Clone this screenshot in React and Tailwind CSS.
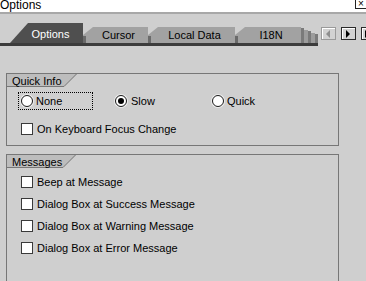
const Radio = ({ checked }) => (
  <span className="flex h-[12px] w-[12px] shrink-0 items-center justify-center rounded-full border border-[#1a1a1a] bg-white shadow-[0_0_0_1px_#ececec]">
    {checked && <span className="h-[6px] w-[6px] rounded-full bg-black" />}
  </span>
);

const Check = ({ label }) => (
  <div className="flex h-[12px] items-center gap-[4px] pl-[14px]">
    <span className="h-[12px] w-[12px] shrink-0 border border-[#3a3a3a] bg-white" />
    <span className="leading-[12px] whitespace-nowrap">{label}</span>
  </div>
);

const Legend = ({ title, width }) => (
  <div className="flex h-[13px]">
    <div className={`h-[13px] border-b border-[#777] bg-[#bdbdbd] pl-[5px] leading-[14px] ${width}`}>
      {title}
    </div>
    <svg width="13" height="13" viewBox="0 0 13 13" className="shrink-0">
      <polygon points="0,0 13,0 0,12.5" fill="#bdbdbd" />
      <line x1="0" y1="12.5" x2="13" y2="-0.5" stroke="#777" strokeWidth="1" />
    </svg>
  </div>
);

const Tab = ({ label, width }) => (
  <div
    className={`relative flex h-[16px] shrink-0 items-center justify-center bg-[#a2a2a2] pl-[6px] leading-[16px] [clip-path:polygon(0_100%,0_8px,10px_0,100%_0,100%_100%)] ${width}`}
  >
    <span className="absolute bottom-0 left-0 h-[7px] w-[3px] bg-[#6a6a6a]" />
    {label}
  </div>
);

const Arrow = ({ dir, color }) => (
  <svg width="5" height="8" viewBox="0 0 5 8">
    {dir === "left" ? (
      <polygon points="4,0 0,4 4,8" fill={color} />
    ) : (
      <polygon points="0,0 4,4 0,8" fill={color} />
    )}
  </svg>
);

export default function App() {
  return (
    <div className="h-[281px] w-[366px] overflow-hidden bg-[#cfcfcf] font-['Liberation_Sans',Arial,sans-serif] text-[11px] text-black">
      {/* title bar */}
      <div className="flex h-[12px] items-start justify-between bg-white">
        <span className="-mt-[1px] text-[12px] leading-[12px]">Options</span>
        <span className="-mt-[1px] flex h-[10px] w-[11px] items-center justify-center border-b border-l border-[#222] bg-white text-[10px] leading-[9px]">
          ×
        </span>
      </div>
      <div className="h-[2px] bg-[#a8a8a8]" />

      {/* tab strip */}
      <div className="flex h-[32px] items-start">
        <div className="flex w-[318px] shrink-0 flex-col">
          <div className="flex h-[29px] items-end pl-[10px]">
            <div className="flex h-[20px] w-[73px] shrink-0 items-center justify-center bg-[#4f4f4f] pl-[8px] pt-[2px] leading-[16px] text-white [clip-path:polygon(0_100%,18px_0,100%_0,100%_100%)]">
              Options
            </div>
            <Tab label="Cursor" width="w-[65px]" />
            <Tab label="Local Data" width="w-[87px]" />
            <Tab label="I18N" width="w-[66px]" />
            <div className="h-[15px] w-[3px] bg-[#7a7a7a]" />
            <div className="h-[13px] w-[4px] bg-[#9c9c9c]" />
            <div className="h-[12px] w-[3px] bg-[#7a7a7a]" />
            <div className="h-[10px] w-[4px] bg-[#9c9c9c]" />
            <div className="h-[9px] w-[3px] bg-[#7a7a7a]" />
          </div>
          <div className="h-[3px] bg-[#3c3c3c]" />
        </div>
        <div className="ml-[3px] mt-[13px] flex">
          <div className="flex h-[13px] w-[15px] shrink-0 items-center justify-center border border-[#9a9a9a] bg-[#d2d2d2] shadow-[inset_1px_1px_0_#fff]">
            <Arrow dir="left" color="#8e8e8e" />
          </div>
          <div className="ml-[5px] flex h-[13px] w-[15px] shrink-0 items-center justify-center border border-[#2a2a2a] bg-[#d2d2d2] shadow-[inset_1px_1px_0_#fff]">
            <Arrow dir="right" color="#000" />
          </div>
          <div className="ml-[5px] flex h-[13px] w-[15px] shrink-0 items-center justify-center gap-[1px] border border-[#2a2a2a] bg-[#d2d2d2] shadow-[inset_1px_1px_0_#fff]">
            <Arrow dir="right" color="#000" />
            <span className="h-[8px] w-[1px] bg-black" />
          </div>
        </div>
      </div>

      {/* Quick Info */}
      <div className="ml-[6px] mt-[27px] h-[73px] w-[333px] border border-[#777]">
        <Legend title="Quick Info" width="w-[57px]" />
        <div className="mt-[5px] flex h-[18px] items-center pl-[11px]">
          <div className="flex h-[18px] w-[75px] shrink-0 items-center gap-[3px] border border-dotted border-black pl-[2px] leading-[12px]">
            <Radio />
            <span>None</span>
          </div>
          <div className="ml-[22px] flex w-[97px] shrink-0 items-center gap-[4px] leading-[12px]">
            <Radio checked />
            <span>Slow</span>
          </div>
          <div className="flex items-center gap-[3px] leading-[12px]">
            <Radio />
            <span>Quick</span>
          </div>
        </div>
        <div className="mt-[13px]">
          <Check label="On Keyboard Focus Change" />
        </div>
      </div>

      {/* Messages */}
      <div className="ml-[6px] mt-[8px] h-[140px] w-[333px] border border-[#777]">
        <Legend title="Messages" width="w-[56px]" />
        <div className="mt-[8px] flex flex-col gap-[10px]">
          <Check label="Beep at Message" />
          <Check label="Dialog Box at Success Message" />
          <Check label="Dialog Box at Warning Message" />
          <Check label="Dialog Box at Error Message" />
        </div>
      </div>
    </div>
  );
}
